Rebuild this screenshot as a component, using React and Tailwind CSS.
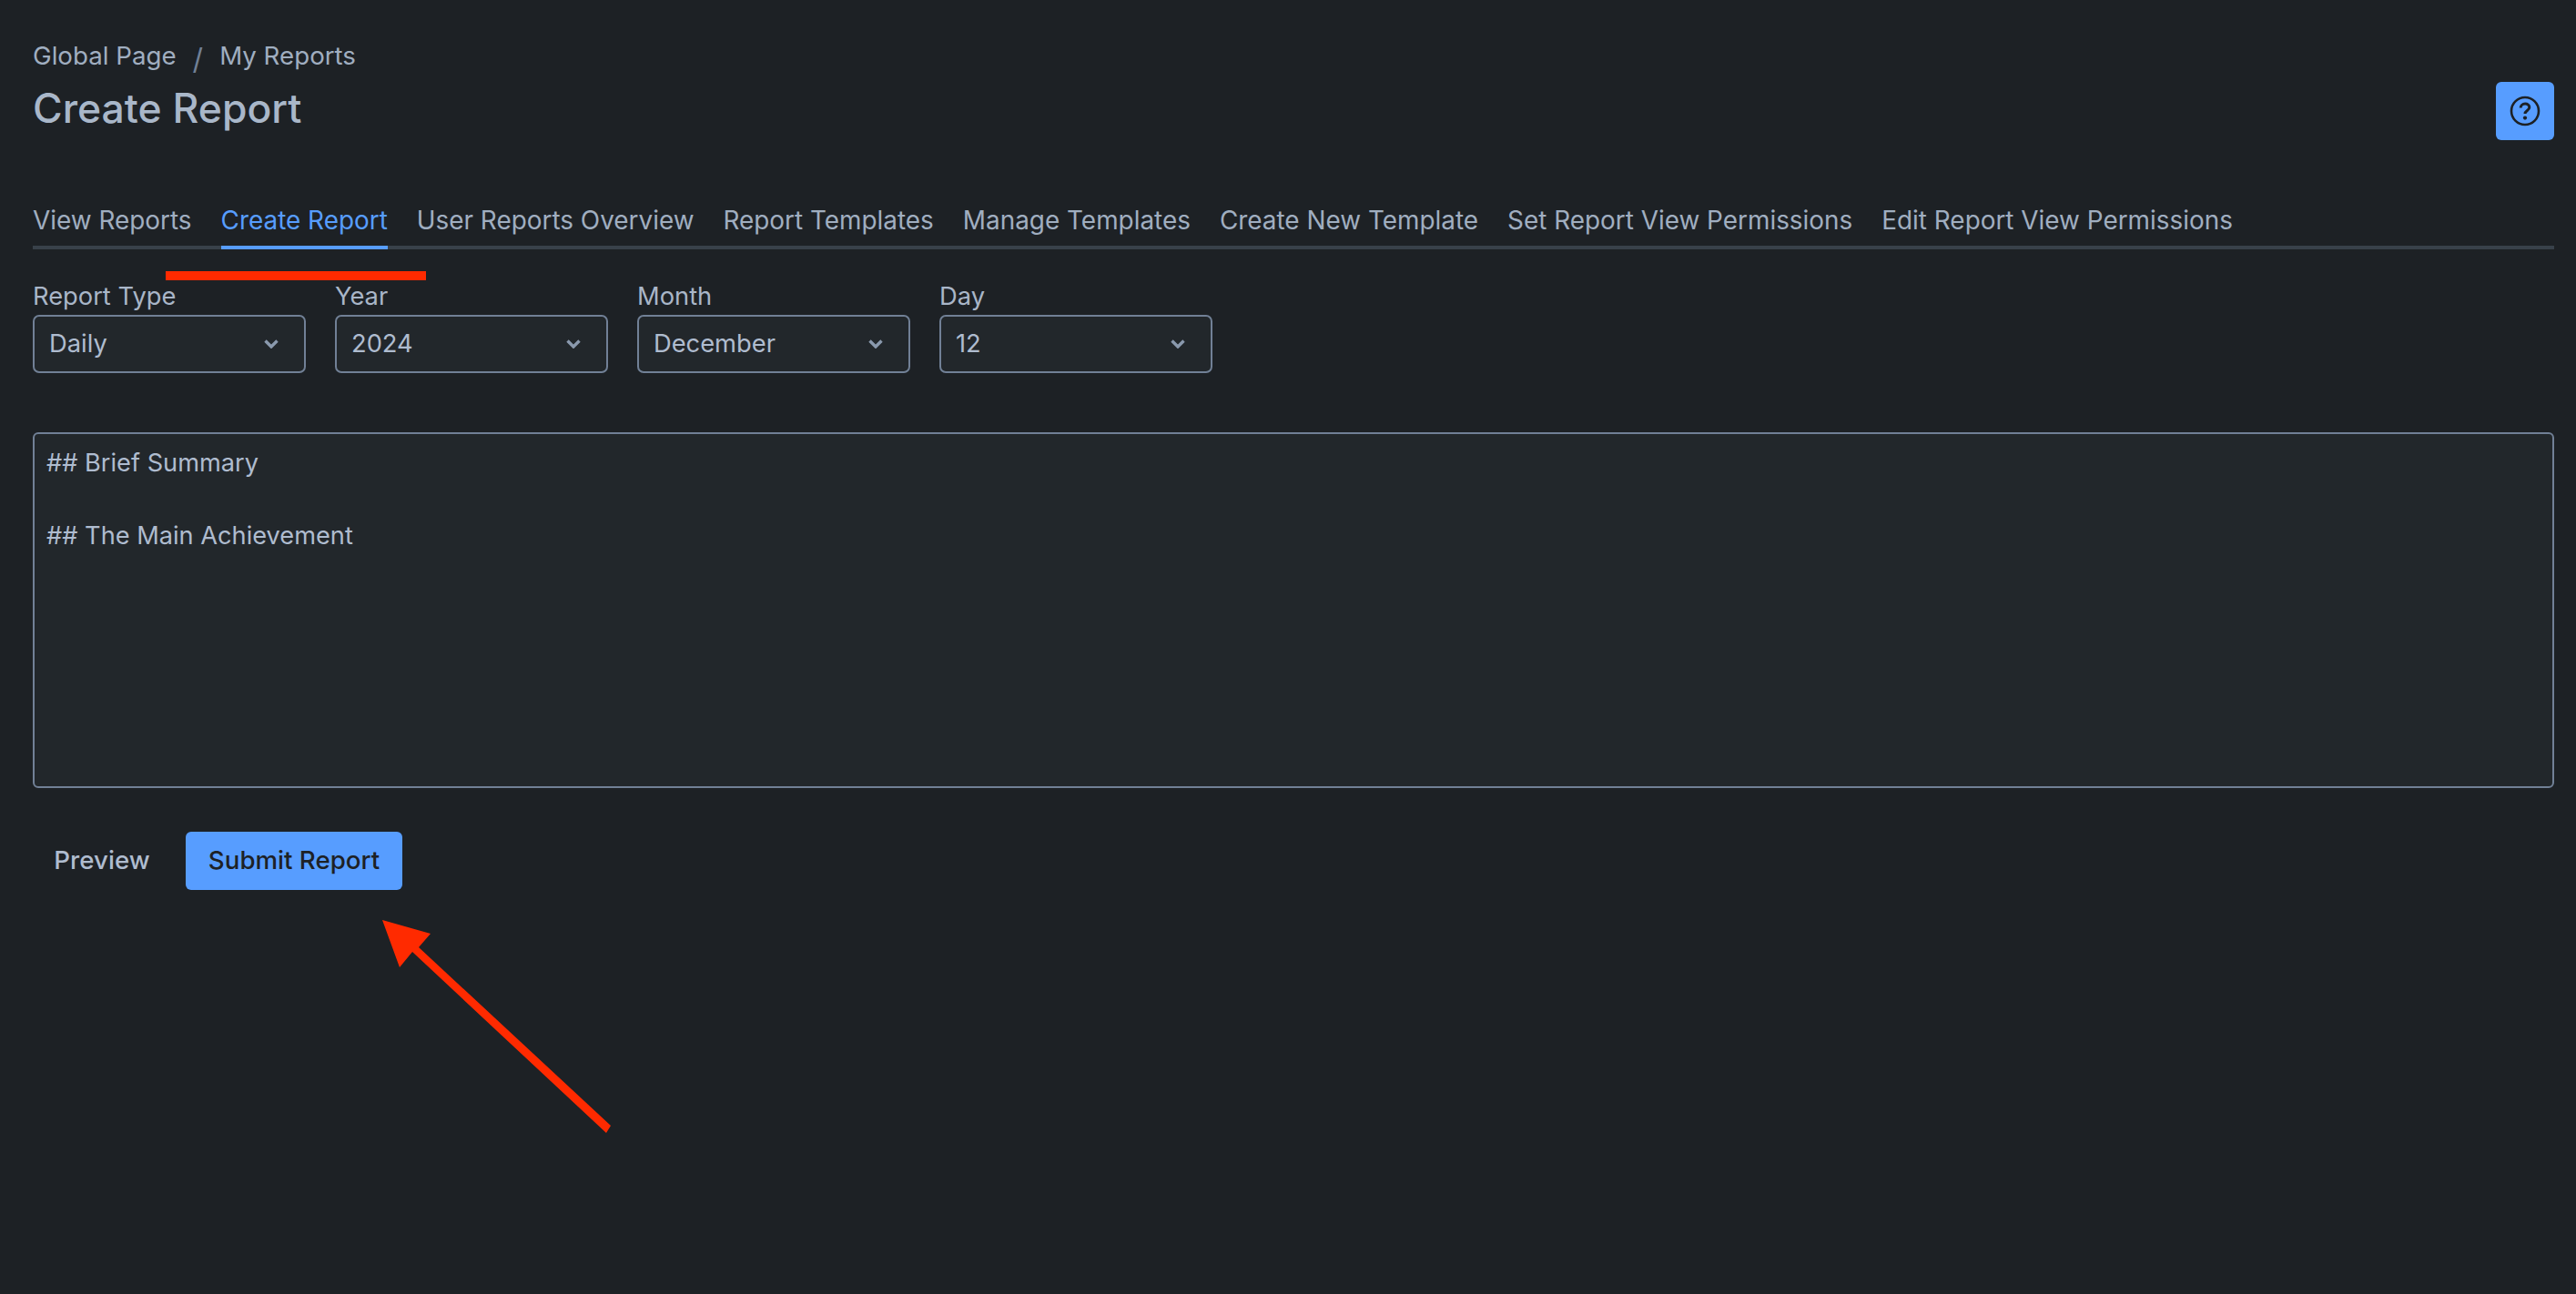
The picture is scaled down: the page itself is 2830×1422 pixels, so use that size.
import { useState } from "react";

const tabs = [
  "View Reports",
  "Create Report",
  "User Reports Overview",
  "Report Templates",
  "Manage Templates",
  "Create New Template",
  "Set Report View Permissions",
  "Edit Report View Permissions",
];

const selects = [
  { label: "Report Type", value: "Daily" },
  { label: "Year", value: "2024" },
  { label: "Month", value: "December" },
  { label: "Day", value: "12" },
];

function Chevron() {
  return (
    <svg width="16" height="10" viewBox="0 0 16 10" fill="none" className="text-[#8a99ad]">
      <path d="M1.5 1.5l6.5 6.5 6.5-6.5" stroke="currentColor" strokeWidth="3.4" />
    </svg>
  );
}

function SelectField({ label, value }) {
  return (
    <div className="w-[300px]">
      <label className="block h-[40px] text-[27.3px] leading-[40px] text-[#a9b6c8]">{label}</label>
      <div className="flex h-[64px] items-center justify-between rounded-[7px] border-2 border-[#718096] bg-[#22272b] pl-4 pr-7 text-[27.3px] text-[#afbccf]">
        <span>{value}</span>
        <Chevron />
      </div>
    </div>
  );
}

function App() {
  const [text, setText] = useState("## Brief Summary\n\n## The Main Achievement");

  return (
    <div className="relative min-h-screen bg-[#1d2125] pl-9 pr-6 pt-[42px] font-['Inter',sans-serif] text-[#afbccf]">
      <div className="flex items-start justify-between">
        <div>
          <div className="flex h-[40px] items-center text-[27.7px] text-[#a0aec0]">
            <span>Global Page</span>
            <span className="mx-[18px] mt-[6px] text-[32px] text-[#718096]">/</span>
            <span>My Reports</span>
          </div>
          <h1 className="mt-[7px] text-[44.5px] font-medium leading-[60px] text-[#a9b7c9]">Create Report</h1>
        </div>
        <button className="mt-[48px] flex h-16 w-16 items-center justify-center rounded-[6px] bg-[#579dff] text-[#1d2125]">
          <svg width="36" height="36" viewBox="0 0 36 36" fill="none">
            <circle cx="18" cy="18" r="15" stroke="currentColor" strokeWidth="2.6" />
            <path d="M13.2 14.6c0-2.8 2.2-4.6 4.9-4.6s4.7 1.6 4.7 4c0 3.4-4.8 3.6-4.8 7" stroke="currentColor" strokeWidth="3" />
            <circle cx="18" cy="25.6" r="2.1" fill="currentColor" />
          </svg>
        </button>
      </div>

      <div className="mt-[66px] flex gap-8 border-b-4 border-[#38414a]">
        {tabs.map((tab) => (
          <div
            key={tab}
            className={
              tab === "Create Report"
                ? "-mb-1 h-[54px] border-b-4 border-[#579dff] pt-[2px] text-[27.9px] leading-[40px] text-[#579dff]"
                : "h-[50px] pt-[2px] text-[27.9px] leading-[40px] text-[#a0aec0]"
            }
          >
            {tab}
          </div>
        ))}
      </div>

      <div className="mt-8 flex gap-8">
        {selects.map((s) => (
          <SelectField key={s.label} label={s.label} value={s.value} />
        ))}
      </div>

      <textarea
        value={text}
        onChange={(e) => setText(e.target.value)}
        className="mt-[65px] block h-[391px] w-full resize-none rounded-[6px] border-2 border-[#718096] bg-[#22272b] px-[13px] py-[12px] text-[27.2px] leading-[40px] text-[#afbccf] outline-none"
      />

      <div className="mt-[48px] flex items-center gap-4">
        <button className="h-16 w-[152px] rounded-[6px] text-[27.7px] font-medium text-[#afbccf]">Preview</button>
        <button className="h-16 w-[238px] rounded-[6px] bg-[#579dff] text-[27.7px] font-medium text-[#1d2125]">Submit Report</button>
      </div>

      {/* annotations drawn on top of the screenshot */}
      <div className="absolute left-[182px] top-[298px] h-[10px] w-[286px] bg-[#ff2a00]" />
      <svg className="absolute left-0 top-0" width="700" height="1260" fill="#ff2a00">
        <polygon points="420,1011 473,1026 460,1041 671,1237 666,1245 453,1046 439,1063" />
      </svg>
    </div>
  );
}

export default App;
